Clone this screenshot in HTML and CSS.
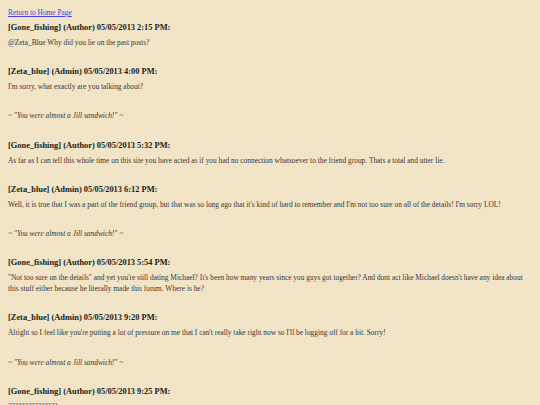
FILE: index.html
```html
<!DOCTYPE html>
<html>
<head>
<meta charset="utf-8">
<link rel="stylesheet" href="styles.css">
</head>
<body>
<div class="page">
  <p class="nav"><a href="#" class="home">Return to Home Page</a></p>

  <div class="post">
    <p class="hdr">[Gone_fishing] (Author) 05/05/2013 2:15 PM:</p>
    <p class="msg">@Zeta_Blue Why did you lie on the past posts?</p>
  </div>

  <div class="post">
    <p class="hdr">[Zeta_blue] (Admin) 05/05/2013 4:00 PM:</p>
    <p class="msg">I'm sorry, what exactly are you talking about?</p>
    <p class="sig">~ "You were almost a Jill sandwich!" ~</p>
  </div>

  <div class="post">
    <p class="hdr">[Gone_fishing] (Author) 05/05/2013 5:32 PM:</p>
    <p class="msg">As far as I can tell this whole time on this site you have acted as if you had no connection whatsoever to the friend group. Thats a total and utter lie.</p>
  </div>

  <div class="post">
    <p class="hdr">[Zeta_blue] (Admin) 05/05/2013 6:12 PM:</p>
    <p class="msg">Well, it is true that I was a part of the friend group, but that was so long ago that it's kind of hard to remember and I'm not too sure on all of the details! I'm sorry LOL!</p>
    <p class="sig">~ "You were almost a Jill sandwich!" ~</p>
  </div>

  <div class="post">
    <p class="hdr">[Gone_fishing] (Author) 05/05/2013 5:54 PM:</p>
    <p class="msg">"Not too sure on the details" and yet you're still dating Michael? It's been how many years since you guys got together? And dont act like Michael doesn't have any idea about this stuff either because he literally made this forum. Where is he?</p>
  </div>

  <div class="post">
    <p class="hdr">[Zeta_blue] (Admin) 05/05/2013 9:20 PM:</p>
    <p class="msg">Alright so I feel like you're putting a lot of pressure on me that I can't really take right now so I'll be logging off for a bit. Sorry!</p>
    <p class="sig">~ "You were almost a Jill sandwich!" ~</p>
  </div>

  <div class="post">
    <p class="hdr">[Gone_fishing] (Author) 05/05/2013 9:25 PM:</p>
    <p class="msg">???????????????</p>
  </div>
</div>
</body>
</html>
```
FILE: styles.css
```css
html, body {
  margin: 0;
  padding: 0;
  background: #f1e4c7;
}
.page {
  padding: 7px 8px;
  font-family: "Liberation Serif", "Times New Roman", serif;
  font-size: 7.4px;
  line-height: 11px;
  color: #3a3530;
}
p {
  margin: 0;
}
.nav {
  margin-bottom: 4px;
}
.home {
  color: #4a3fd6;
  text-decoration: underline;
}
.hdr {
  font-weight: bold;
  font-size: 8.4px;
  color: #201c18;
  margin-bottom: 4px;
}
.msg, .sig {
  margin-bottom: 18.2px;
}
.sig {
  font-style: italic;
}
```
